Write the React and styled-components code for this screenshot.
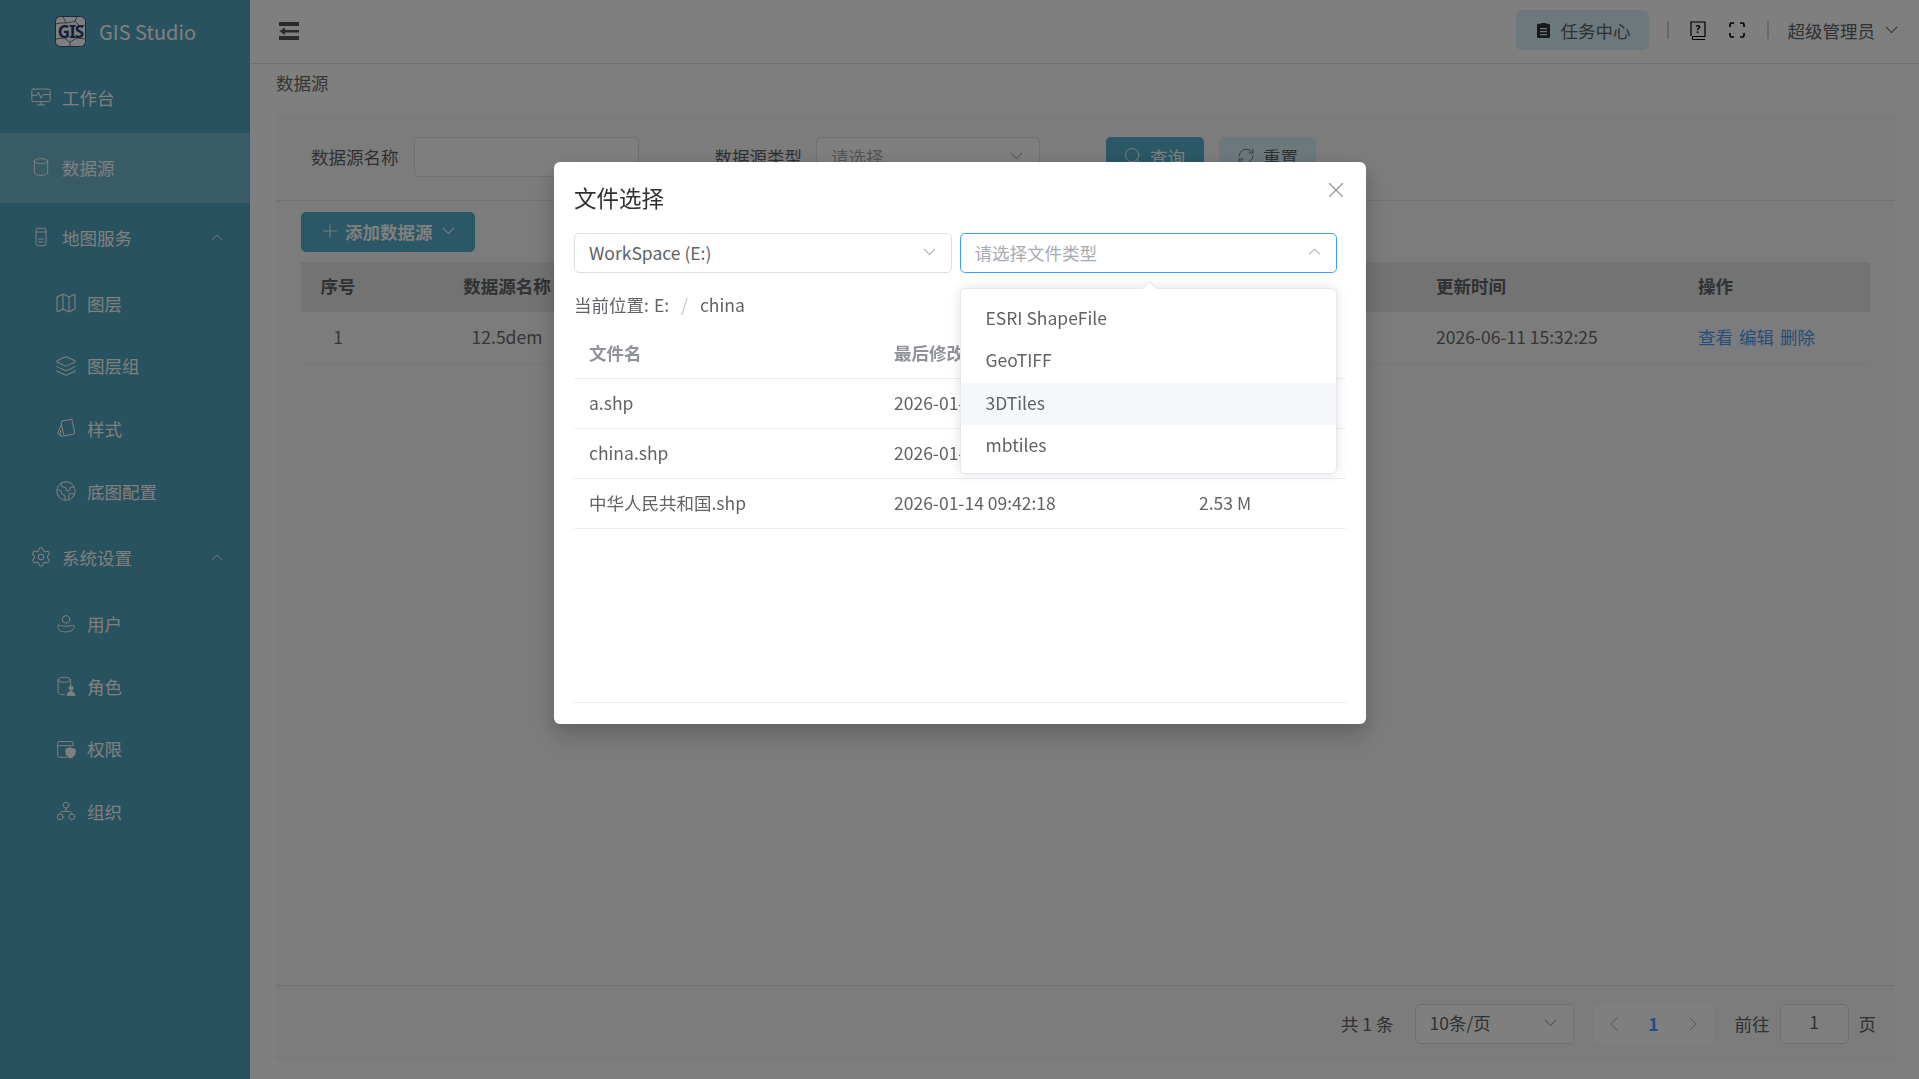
import React from "react";
import styled, { createGlobalStyle } from "styled-components";
import { ChevronLeft, ChevronRight, Map, Layers, Earth, Settings, Plus, Search, RefreshCw, X } from "lucide-react";

const GlobalStyle = createGlobalStyle`
  html, body {
    margin: 0;
    height: 100%;
    overflow: hidden;
    font-family: "Noto Sans CJK SC", "Noto Sans", sans-serif;
    font-size: 17.5px;
    color: #606266;
  }
  * { box-sizing: border-box; }
`;

const Shell = styled.div`
  display: flex;
  height: 1079px;
  background: #fefefe;
`;

const Sidebar = styled.aside`
  width: 250px;
  flex: none;
  background: #50a4be;
  color: #fff;
`;

const Brand = styled.div`
  height: 63px;
  display: flex;
  align-items: center;
  padding: 0 0 0 55px;
  gap: 13px;
  font-size: 20px;
`;

const Item = styled.div`
  display: flex;
  align-items: center;
  height: ${(p) => (p.$sub ? "62.6px" : "70px")};
  padding: 0 27px 2px ${(p) => (p.$sub ? "56px" : "31px")};
  gap: 11px;
  background: ${(p) => (p.$active ? "rgba(255,255,255,.2)" : "transparent")};
  & > span:last-of-type { flex: 1; }
`;

const IconSlot = styled.span`
  width: 20px;
  height: 20px;
  flex: none;
  display: flex;
  align-items: center;
  justify-content: center;
  & > svg { flex: none; }
`;

const Main = styled.main`
  flex: 1;
  min-width: 0;
  display: flex;
  flex-direction: column;
`;

const Topbar = styled.header`
  height: 64px;
  flex: none;
  display: flex;
  align-items: center;
  padding: 0 21px 1px 29px;
  background: #fff;
  border-bottom: 1px solid #dedede;
`;

const TopRight = styled.div`
  margin-left: auto;
  display: flex;
  align-items: center;
  padding-bottom: 2px;
`;

const TaskButton = styled.div`
  width: 133px;
  height: 40px;
  border-radius: 6px;
  background: #d8f0f8;
  display: flex;
  align-items: center;
  padding-left: 21px;
  gap: 11px;
  color: #606266;
`;

const VLine = styled.i`
  display: block;
  width: 2px;
  height: 18px;
  background: #d0d0d0;
  margin: ${(p) => p.$margin};
`;

const TopIcon = styled.span`
  display: flex;
  margin-right: ${(p) => p.$right || 0}px;
`;

const Crumb = styled.div`
  height: 50px;
  flex: none;
  padding: 8px 0 0 26px;
  line-height: 22px;
  color: #6a6a6a;
`;

const Panel = styled.section`
  flex: 1;
  margin: 0 24px 18px 26px;
  background: #f8f8f8;
  display: flex;
  flex-direction: column;
  min-height: 0;
`;

const SearchForm = styled.div`
  height: 87px;
  flex: none;
  display: flex;
  align-items: center;
  padding: 0 0 0 35px;
  border-bottom: 1px solid #e4e4e4;
`;

const Label = styled.label`
  margin: ${(p) => p.$margin || 0};
  padding-bottom: 2px;
  white-space: nowrap;
`;

const Field = styled.div`
  width: ${(p) => p.$width}px;
  height: 40px;
  flex: none;
  margin-left: ${(p) => p.$left || 0}px;
  display: flex;
  align-items: center;
  justify-content: space-between;
  padding: 0 16px 2px 14px;
  border: 1px solid #dcdfe6;
  border-radius: 5px;
  background: #fff;
  color: ${(p) => (p.$value ? "#606266" : "#a8abb2")};
`;

const FormButton = styled.div`
  width: ${(p) => p.$width}px;
  height: 40px;
  flex: none;
  margin-left: ${(p) => p.$left}px;
  padding: 0 0 2px ${(p) => p.$pad}px;
  display: flex;
  align-items: center;
  gap: ${(p) => p.$gap}px;
  border-radius: 5px;
  background: ${(p) => (p.$primary ? "#54b0cc" : "#d8f0f8")};
  color: ${(p) => (p.$primary ? "#fff" : "#606266")};
`;

const TableArea = styled.div`
  flex: 1;
  padding: 11px 25px 0;
`;

const AddButton = styled.div`
  width: 174px;
  height: 40px;
  display: flex;
  align-items: center;
  padding: 0 0 2px 18px;
  gap: 4px;
  border-radius: 5px;
  background: #54b0cc;
  color: #fff;
  font-weight: 700;
  margin-bottom: 10px;
  & > svg:last-child { margin-left: 5px; }
`;

const Row = styled.div`
  display: grid;
  grid-template-columns: 74px 264px 1fr 262px 188px;
  align-items: center;
  height: ${(p) => (p.$head ? "50px" : "52px")};
  padding-bottom: ${(p) => (p.$head ? 3 : 2)}px;
  background: ${(p) => (p.$head ? "#e6e6e6" : "transparent")};
  font-weight: ${(p) => (p.$head ? 700 : 400)};
  border-bottom: ${(p) => (p.$head ? "none" : "1px solid #efefef")};
  color: ${(p) => (p.$head ? "#606266" : "#6c6c6c")};
`;

const Cell = styled.div`
  padding-left: ${(p) => (p.$center ? 0 : 16)}px;
  text-align: ${(p) => (p.$center ? "center" : "left")};
`;

const Links = styled.div`
  display: flex;
  gap: 6px;
  padding-left: 16px;
  color: #4a9ff5;
`;

const PanelFooter = styled.div`
  height: 76px;
  flex: none;
  display: flex;
  align-items: center;
  justify-content: flex-end;
  padding: 0 19px 0 0;
  border-top: 1px solid #e4e4e4;
`;

const Pager = styled.div`
  width: 120px;
  height: 40px;
  margin: 0 21px 0 20px;
  display: flex;
  align-items: center;
  justify-content: space-between;
  padding: 0 8px;
  background: #fff;
  color: #a8abb2;
  & b { color: #409eff; }
`;

const GoInput = styled.div`
  width: 69px;
  height: 40px;
  margin: 0 10px;
  display: flex;
  align-items: center;
  justify-content: center;
  padding-bottom: 4px;
  border: 1px solid #dcdfe6;
  border-radius: 5px;
  background: #fff;
`;

const Mask = styled.div`
  position: fixed;
  inset: 0;
  background: rgba(0, 0, 0, 0.5);
`;

const Dialog = styled.div`
  width: 812px;
  height: 562px;
  margin: 162px 0 0 554px;
  padding: 0 20px 21px;
  position: relative;
  display: flex;
  flex-direction: column;
  background: #fff;
  border-radius: 6px;
  box-shadow: 0 12px 32px 4px rgba(0, 0, 0, 0.08), 0 8px 20px rgba(0, 0, 0, 0.16);
`;

const DialogTitle = styled.div`
  height: 71px;
  flex: none;
  padding-top: 19px;
  font-size: 22.5px;
  line-height: 32px;
  color: #303133;
`;

const CloseBtn = styled.div`
  position: absolute;
  top: 15px;
  right: 17px;
  color: #909399;
  display: flex;
`;

const Selects = styled.div`
  display: flex;
  gap: 8px;
  flex: none;
`;

const SelectBox = styled.div`
  position: relative;
  width: 377.5px;
  height: 40px;
  padding: 0 15px 2px 14px;
  display: flex;
  align-items: center;
  justify-content: space-between;
  border-radius: 5px;
  border: 1px solid ${(p) => (p.$open ? "#409eff" : "#dcdfe6")};
  color: ${(p) => (p.$open ? "#a8abb2" : "#606266")};
  background: #fff;
`;

const Dropdown = styled.ul`
  position: absolute;
  top: 54px;
  left: -1px;
  width: 377.5px;
  height: 186px;
  margin: 0;
  padding: 9px 0 8px;
  list-style: none;
  background: #fff;
  border: 1px solid #e4e7ed;
  border-radius: 5px;
  box-shadow: 0 0 12px rgba(0, 0, 0, 0.12);
  z-index: 3;
  &::before {
    content: "";
    position: absolute;
    top: -6px;
    left: 183px;
    width: 10px;
    height: 10px;
    background: #fff;
    border: 1px solid #e4e7ed;
    border-right: none;
    border-bottom: none;
    transform: rotate(45deg);
  }
`;

const Option = styled.li`
  height: 42.4px;
  line-height: 40px;
  padding-left: 25px;
  color: #606266;
  background: ${(p) => (p.$hover ? "#f5f7fa" : "transparent")};
  position: relative;
`;

const PathBar = styled.div`
  height: 56px;
  flex: none;
  padding-top: 6px;
  display: flex;
  align-items: center;
  & em { font-style: normal; margin-right: 5px; }
  & i { font-style: normal; color: #c0c4cc; margin: 0 12px; }
`;

const FileTable = styled.div`
  flex: 1;
  min-height: 0;
  border-bottom: 1px solid #ebeef5;
`;

const FileRow = styled.div`
  display: grid;
  grid-template-columns: 305px 305px 162px;
  align-items: center;
  height: 50px;
  padding-bottom: 2px;
  border-bottom: 1px solid #ebeef5;
  color: ${(p) => (p.$head ? "#909399" : "#606266")};
  font-weight: ${(p) => (p.$head ? 700 : 400)};
  & > div { padding-left: 15px; white-space: nowrap; overflow: hidden; }
`;

const Svg = styled.svg.attrs({ viewBox: "0 0 24 24", fill: "none", stroke: "currentColor", strokeLinecap: "round", strokeLinejoin: "round" })`
  width: 20px;
  height: 20px;
  stroke-width: 1.2;
  flex: none;
  display: block;
`;

const CaretSvg = styled.svg.attrs({ viewBox: "0 0 14 8", fill: "none", stroke: "currentColor", strokeWidth: 1.1 })`
  width: ${(p) => p.$size || 13}px;
  height: ${(p) => ((p.$size || 13) * 8) / 14}px;
  flex: none;
  display: block;
  transform: ${(p) => (p.$up ? "rotate(180deg)" : "none")};
  color: ${(p) => p.$color || "inherit"};
`;

const NameCaret = styled.span`
  display: flex;
  margin-left: 10px;
`;

const Caret = (props) => (
  <CaretSvg {...props}>
    <path d="M1 1 7 7 13 1" />
  </CaretSvg>
);

const menuIcon = { strokeWidth: 1.1 };

const MonitorIcon = () => (
  <Svg>
    <rect x="1" y="2.500" width="22" height="15" rx="1.500" />
    <path d="M1 10h6l2-3.500 3 7 2.500-4.500H23M12 17.500v4M7.500 21.500h9" />
  </Svg>
);
const DbIcon = () => (
  <Svg>
    <ellipse cx="12" cy="5" rx="8" ry="3" />
    <path d="M4 5v14c0 1.700 3.600 3 8 3s8-1.300 8-3V5" />
  </Svg>
);
const PhoneIcon = () => (
  <Svg>
    <rect x="6" y="1.500" width="12" height="21" rx="2.500" />
    <path d="M6 6h12M9 14.500h6M9 18h6" />
  </Svg>
);
const StyleIcon = () => (
  <Svg>
    <rect x="7.500" y="2.500" width="13.500" height="18" rx="2" transform="rotate(-12 14.200 11.500)" />
    <path d="M6 8.500 2.500 17c-.6 1.600 0 2.800 1.500 3.500l4.500 1.800M5.500 15l-.5 5" />
  </Svg>
);
const UserIcon = () => (
  <Svg>
    <circle cx="12" cy="6.500" r="4.500" />
    <path d="M3 13.500c3 1.500 15 1.500 18 0 1 0 1 .8 1 1.500 0 4-4 6.500-10 6.500S2 19 2 15c0-.7.100-1.500 1-1.500Z" />
  </Svg>
);
const RoleIcon = () => (
  <Svg>
    <ellipse cx="10" cy="4.500" rx="7.500" ry="3" />
    <path d="M2.500 4.500v15c0 1.700 3 3 7.500 3M17.500 4.500V11" />
    <circle cx="18" cy="14.500" r="2.500" fill="currentColor" />
    <path d="M13.500 23c0-3 2-4.500 4.500-4.500s4.500 1.500 4.500 4.500Z" fill="currentColor" />
  </Svg>
);
const PermIcon = () => (
  <Svg>
    <path d="M20.500 8V5a2 2 0 0 0-2-2H4a2 2 0 0 0-2 2v15a2 2 0 0 0 2 2h9M2 8h18.500" />
    <path d="M17.500 10.500 23 12.500v4c0 3-2.500 5-5.500 6.500-3-1.500-5.500-3.500-5.500-6.500v-4Z" fill="currentColor" />
  </Svg>
);
const OrgIcon = () => (
  <Svg>
    <circle cx="12" cy="5" r="3.500" />
    <circle cx="5" cy="19" r="3.500" />
    <circle cx="19" cy="19" r="3.500" />
    <path d="M12 8.500v4M5 15.500c0-2 1-3 3-3h8c2 0 3 1 3 3" />
  </Svg>
);
const Logo = () => (
  <svg width="31" height="31" viewBox="0 0 31 31">
    <rect x="0.500" y="0.500" width="30" height="30" rx="5" fill="#ffffff" stroke="#3b4f80" />
    <path d="M8 0.500 11 7l9-1.500 2-5M0.500 8 5 7l6 0M20 5.500 25 10l5.500-1M0.500 23 9 22l6 4 7-4 8.500 1M15 26v4.500" fill="none" stroke="#6b7590" strokeWidth="1" />
    <text x="15.500" y="21.500" textAnchor="middle" fontSize="17" fontWeight="700" fontFamily="'Noto Sans', sans-serif" fill="#2c3f70" letterSpacing="-1">GIS</text>
  </svg>
);
const MenuToggle = () => (
  <svg width="20" height="18" viewBox="0 0 20 18" fill="#555">
    <rect x="0" y="0" width="20" height="4" />
    <rect x="0" y="14" width="20" height="4" />
    <rect x="6" y="8" width="14" height="2.500" />
    <path d="M0.500 9.250 6 5.500v7.500Z" />
  </svg>
);
const ClipIcon = () => (
  <svg width="13" height="16" viewBox="0 0 13 16" fill="#303133">
    <path d="M1.500 1.800H4V1h5v.800h2.500A1.500 1.500 0 0 1 13 3.300v11.200a1.500 1.500 0 0 1-1.500 1.500h-10A1.500 1.500 0 0 1 0 14.500V3.300a1.500 1.500 0 0 1 1.500-1.500Z" />
    <path d="M3 6h7v1.300H3zM3 9h7v1.300H3zM3 12h7v1.300H3z" fill="#d8f0f8" />
  </svg>
);
const HelpIcon = () => (
  <svg width="16" height="19" viewBox="0 0 16 19" fill="none" stroke="#000" strokeWidth="1.200">
    <path d="M1 15V1h14v14.500H3a2 2 0 0 0 0 3h12" />
    <text x="8" y="11.500" textAnchor="middle" fontSize="10" fontWeight="700" fontFamily="'Noto Sans', sans-serif" fill="#000" stroke="none">?</text>
  </svg>
);
const FullIcon = () => (
  <svg width="16" height="16" viewBox="0 0 16 16" fill="none" stroke="#000" strokeWidth="1.600">
    <path d="M1 5V2.500A1.500 1.500 0 0 1 2.500 1H5M11 1h2.500A1.500 1.500 0 0 1 15 2.500V5M15 11v2.500a1.500 1.500 0 0 1-1.500 1.500H11M5 15H2.500A1.500 1.500 0 0 1 1 13.500V11" />
  </svg>
);

const files = [
  { name: "a.shp", time: "2026-01-14 09:42:18", size: "1.20 M" },
  { name: "china.shp", time: "2026-01-14 09:42:18", size: "2.53 M" },
  { name: "中华人民共和国.shp", time: "2026-01-14 09:42:18", size: "2.53 M" },
];

const App = () => (
  <>
    <GlobalStyle />
    <Shell>
      <Sidebar>
        <Brand>
          <Logo />
          GIS Studio
        </Brand>
        <Item><IconSlot><MonitorIcon /></IconSlot><span>工作台</span></Item>
        <Item $active><IconSlot><DbIcon /></IconSlot><span>数据源</span></Item>
        <Item><IconSlot><PhoneIcon /></IconSlot><span>地图服务</span><Caret $up $size={12} /></Item>
        <Item $sub><IconSlot><Map {...menuIcon} size={24} /></IconSlot><span>图层</span></Item>
        <Item $sub><IconSlot><Layers {...menuIcon} size={22} /></IconSlot><span>图层组</span></Item>
        <Item $sub><IconSlot><StyleIcon /></IconSlot><span>样式</span></Item>
        <Item $sub><IconSlot><Earth {...menuIcon} size={22} /></IconSlot><span>底图配置</span></Item>
        <Item><IconSlot><Settings {...menuIcon} size={22} /></IconSlot><span>系统设置</span><Caret $up $size={12} /></Item>
        <Item $sub><IconSlot><UserIcon /></IconSlot><span>用户</span></Item>
        <Item $sub><IconSlot><RoleIcon /></IconSlot><span>角色</span></Item>
        <Item $sub><IconSlot><PermIcon /></IconSlot><span>权限</span></Item>
        <Item $sub><IconSlot><OrgIcon /></IconSlot><span>组织</span></Item>
      </Sidebar>
      <Main>
        <Topbar>
          <MenuToggle />
          <TopRight>
            <TaskButton><ClipIcon />任务中心</TaskButton>
            <VLine $margin="0 21px 0 18px" />
            <TopIcon $right={23}><HelpIcon /></TopIcon>
            <FullIcon />
            <VLine $margin="0 19px 0 22px" />
            超级管理员
            <NameCaret><Caret $size={13} /></NameCaret>
          </TopRight>
        </Topbar>
        <Crumb>数据源</Crumb>
        <Panel>
          <SearchForm>
            <Label>数据源名称</Label>
            <Field $width={225} $left={15} />
            <Label $margin="0 14px 0 76px">数据源类型</Label>
            <Field $width={224}>请选择<Caret /></Field>
            <FormButton $primary $width={98} $left={66} $pad={17} $gap={7}><Search size={20} strokeWidth={1.1} />查询</FormButton>
            <FormButton $width={97} $left={15} $pad={18} $gap={8}><RefreshCw size={18} strokeWidth={1.1} />重置</FormButton>
          </SearchForm>
          <TableArea>
            <AddButton><Plus size={22} strokeWidth={1} />添加数据源<Caret $size={13} /></AddButton>
            <Row $head>
              <Cell $center>序号</Cell>
              <Cell $center>数据源名称</Cell>
              <div />
              <Cell>更新时间</Cell>
              <Cell>操作</Cell>
            </Row>
            <Row>
              <Cell $center>1</Cell>
              <Cell $center>12.5dem</Cell>
              <div />
              <Cell>2026-06-11 15:32:25</Cell>
              <Links><span>查看</span><span>编辑</span><span>删除</span></Links>
            </Row>
          </TableArea>
          <PanelFooter>
            共 1 条
            <Field $width={159} $left={21} $value>10条/页<Caret $color="#a8abb2" /></Field>
            <Pager><ChevronLeft size={24} strokeWidth={1} /><b>1</b><ChevronRight size={24} strokeWidth={1} /></Pager>
            前往
            <GoInput>1</GoInput>
            页
          </PanelFooter>
        </Panel>
      </Main>
    </Shell>
    <Mask>
      <Dialog>
        <DialogTitle>文件选择</DialogTitle>
        <CloseBtn><X size={26} strokeWidth={1} /></CloseBtn>
        <Selects>
          <SelectBox>WorkSpace (E:)<Caret $color="#a8abb2" /></SelectBox>
          <SelectBox $open>
            请选择文件类型
            <Caret $up $color="#a8abb2" />
            <Dropdown>
              <Option>ESRI ShapeFile</Option>
              <Option>GeoTIFF</Option>
              <Option $hover>3DTiles</Option>
              <Option>mbtiles</Option>
            </Dropdown>
          </SelectBox>
        </Selects>
        <PathBar><em>当前位置:</em>E:<i>/</i>china</PathBar>
        <FileTable>
          <FileRow $head><div>文件名</div><div>最后修改时间</div><div>大小</div></FileRow>
          {files.map((f) => (
            <FileRow key={f.name}><div>{f.name}</div><div>{f.time}</div><div>{f.size}</div></FileRow>
          ))}
        </FileTable>
      </Dialog>
    </Mask>
  </>
);

export default App;
